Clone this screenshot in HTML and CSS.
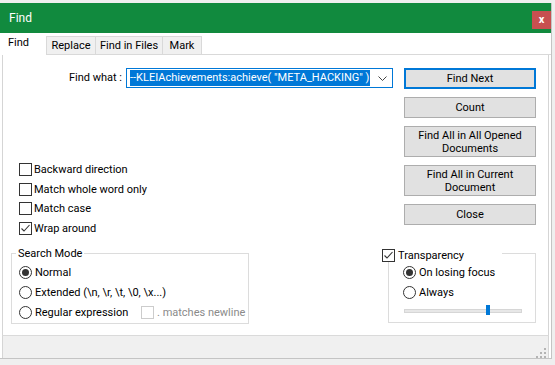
FILE: index.html
```html
<!DOCTYPE html>
<html lang="en">
<head>
    <meta charset="UTF-8">
    <meta name="viewport" content="width=device-width, initial-scale=1.0">
    <title>Find</title>
    <link rel="stylesheet" href="styles.css">
</head>
<body>
    <div class="window">
        <div class="titlebar">
            <span class="title">Find</span>
            <button class="close-btn">x</button>
        </div>

        <div class="tabs">
            <div class="tab active">Find</div>
            <div class="tab tab-replace">Replace</div>
            <div class="tab tab-files">Find in Files</div>
            <div class="tab tab-mark">Mark</div>
        </div>

        <div class="panel">
            <div class="upper">
                <div class="left">
                    <div class="find-row">
                        <label class="find-label">Find what :</label>
                        <div class="combo">
                            <span class="selected">--KLEIAchievements:achieve( "META_HACKING" )</span>
                            <svg class="combo-arrow" width="9" height="5" viewBox="0 0 9 5">
                                <polyline points="0.5,0.5 4.5,4.5 8.5,0.5" fill="none" stroke="#444" stroke-width="1"/>
                            </svg>
                        </div>
                    </div>
                    <div class="options">
                        <label class="check"><span class="box"></span>Backward direction</label>
                        <label class="check"><span class="box"></span>Match whole word only</label>
                        <label class="check"><span class="box"></span>Match case</label>
                        <label class="check">
                            <span class="box">
                                <svg width="11" height="11" viewBox="0 0 11 11"><polyline points="1.5,5.5 4,8 9.5,2" fill="none" stroke="#333" stroke-width="1.1"/></svg>
                            </span>Wrap around
                        </label>
                    </div>
                </div>
                <div class="buttons">
                    <button class="btn default">Find Next</button>
                    <button class="btn">Count</button>
                    <button class="btn tall">Find All in All Opened<br>Documents</button>
                    <button class="btn tall">Find All in Current<br>Document</button>
                    <button class="btn">Close</button>
                </div>
            </div>

            <div class="lower">
                <fieldset class="group search-mode">
                    <legend>Search Mode</legend>
                    <label class="radio"><span class="ring on"></span>Normal</label>
                    <label class="radio"><span class="ring"></span>Extended (\n, \r, \t, \0, \x...)</label>
                    <div class="regex-row">
                        <label class="radio regex"><span class="ring"></span>Regular expression</label>
                        <label class="check disabled"><span class="box"></span>. matches newline</label>
                    </div>
                </fieldset>

                <div class="transparency">
                    <label class="transparency-head">
                        <span class="box">
                            <svg width="11" height="11" viewBox="0 0 11 11"><polyline points="1.5,5.5 4,8 9.5,2" fill="none" stroke="#333" stroke-width="1.1"/></svg>
                        </span>Transparency
                    </label>
                    <label class="radio"><span class="ring on"></span>On losing focus</label>
                    <label class="radio"><span class="ring"></span>Always</label>
                    <div class="slider">
                        <div class="track"></div>
                        <div class="thumb" style="left: 69.5%"></div>
                    </div>
                </div>
            </div>
        </div>

        <div class="footer">
            <svg class="grip" width="11" height="10" viewBox="0 0 11 10">
                <rect x="8" y="0" width="2" height="2" fill="#b4b4b4"/>
                <rect x="4" y="4" width="2" height="2" fill="#b4b4b4"/>
                <rect x="8" y="4" width="2" height="2" fill="#b4b4b4"/>
                <rect x="0" y="8" width="2" height="2" fill="#b4b4b4"/>
                <rect x="4" y="8" width="2" height="2" fill="#b4b4b4"/>
                <rect x="8" y="8" width="2" height="2" fill="#b4b4b4"/>
            </svg>
        </div>
    </div>
</body>
</html>
```

FILE: styles.css
```css
* {
    margin: 0;
    padding: 0;
    box-sizing: border-box;
    font-family: Roboto, "Noto Sans", sans-serif;
}

body {
    background: #efefef;
    width: 555px;
    height: 365px;
    overflow: hidden;
    font-size: 11px;
    color: #000;
}

.window {
    margin-top: 3px;
    width: 552px;
    background: #ffffff;
    border-right: 1px solid #c4c4c4;
    border-bottom: 1px solid #c4c4c4;
}

.titlebar {
    display: flex;
    align-items: flex-start;
    height: 30px;
    background: #118a3e;
}

.title {
    flex: 1;
    padding-left: 9px;
    color: #ffffff;
    font-size: 12px;
    line-height: 30px;
}

.close-btn {
    width: 19px;
    height: 18px;
    margin-top: 8px;
    border: none;
    background: #c75050;
    color: #ffffff;
    font-size: 11px;
    font-weight: bold;
    line-height: 16px;
}

.tabs {
    display: flex;
    align-items: flex-end;
    height: 22px;
    border-bottom: 1px solid #d9d9d9;
}

.tab {
    height: 18px;
    line-height: 17px;
    text-align: center;
    background: #f0f0f0;
    border-top: 1px solid #d9d9d9;
    border-left: 1px solid #d9d9d9;
}

.tab.active {
    width: 46px;
    height: 22px;
    margin-bottom: -1px;
    padding-left: 8px;
    text-align: left;
    line-height: 20px;
    background: #ffffff;
    border: none;
}

.tab-replace {
    width: 49px;
}

.tab-files {
    width: 67px;
}

.tab-mark {
    width: 40px;
    border-right: 1px solid #d9d9d9;
}

.panel {
    height: 281px;
    margin: 0 2px;
    padding-top: 13px;
    border-left: 1px solid #d5d5d5;
    border-right: 1px solid #d5d5d5;
    border-bottom: 1px solid #dadada;
}

.upper {
    display: flex;
}

.left {
    width: 401px;
}

.find-row {
    display: flex;
    height: 20px;
}

.find-label {
    width: 119px;
    margin-right: 4px;
    text-align: right;
    line-height: 19px;
}

.combo {
    display: flex;
    align-items: center;
    width: 267px;
    height: 20px;
    padding-left: 3px;
    border: 1px solid #0078d7;
}

.selected {
    line-height: 16px;
    padding-right: 1px;
    background: #0078d7;
    color: #ffffff;
    white-space: nowrap;
}

.combo-arrow {
    margin-left: auto;
    margin-right: 5px;
}

.options {
    margin: 72px 0 0 16px;
}

.check {
    display: flex;
    align-items: center;
    height: 19.6px;
}

.box {
    display: flex;
    align-items: center;
    justify-content: center;
    width: 13px;
    height: 13px;
    margin-right: 2px;
    background: #ffffff;
    border: 1px solid #333333;
}

.check.disabled {
    color: #8a8a8a;
}

.check.disabled .box {
    border-color: #cccccc;
}

.buttons {
    display: flex;
    flex-direction: column;
    gap: 8px;
    width: 132px;
}

.btn {
    height: 21px;
    background: #e1e1e1;
    border: 1px solid #adadad;
    font-size: 11px;
    line-height: 13px;
    color: #000;
}

.btn.default {
    border: 2px solid #0078d7;
}

.btn.tall {
    height: 31px;
}

.lower {
    display: flex;
    align-items: flex-start;
    margin-top: 7.6px;
}

.group {
    min-width: 0;
    border: 1px solid #dcdcdc;
}

.group legend {
    line-height: 15px;
    padding: 0 2px;
}

.search-mode {
    width: 238px;
    margin-left: 8px;
    padding: 2px 0 1px 7px;
}

.search-mode legend {
    margin-left: -3px;
}

.radio {
    display: flex;
    align-items: center;
    height: 19.7px;
}

.ring {
    display: flex;
    align-items: center;
    justify-content: center;
    width: 13px;
    height: 13px;
    margin-right: 3px;
    border: 1px solid #333333;
    border-radius: 50%;
    background: #ffffff;
}

.ring.on::after {
    content: "";
    width: 7px;
    height: 7px;
    border-radius: 50%;
    background: #333333;
}

.regex-row {
    display: flex;
    align-items: center;
}

.regex {
    width: 122px;
}

.regex-row .check {
    height: 19.7px;
}

.regex-row .box {
    margin-right: 3px;
}

/* group box whose caption is a checkbox; top edge only shows right of the caption */
.transparency {
    position: relative;
    width: 148px;
    margin: 7px 0 0 139px;
    padding: 10px 0 3px 14px;
    border: 1px solid #dcdcdc;
    border-top: none;
}

.transparency::before {
    content: "";
    position: absolute;
    top: 0;
    left: 113px;
    right: -1px;
    height: 1px;
    background: #dcdcdc;
}

.transparency-head {
    position: absolute;
    top: -5px;
    left: -7px;
    display: flex;
    align-items: center;
    line-height: 15px;
}

.transparency-head .box {
    margin-right: 3px;
}

.transparency .radio {
    height: 20px;
}

.slider {
    position: relative;
    width: 118px;
    height: 16px;
    margin-left: 1px;
}

.track {
    position: absolute;
    left: 0;
    right: 0;
    top: 6px;
    height: 4px;
    background: #e7e7e7;
    border: 1px solid #d6d6d6;
}

.thumb {
    position: absolute;
    top: 2px;
    width: 4px;
    height: 10px;
    background: #0078d7;
}

.footer {
    display: flex;
    justify-content: flex-end;
    align-items: flex-end;
    height: 22px;
    margin: 0 2px;
    padding-right: 1px;
    background: #f0f0f0;
    border-left: 1px solid #d5d5d5;
    border-right: 1px solid #d5d5d5;
}
```
